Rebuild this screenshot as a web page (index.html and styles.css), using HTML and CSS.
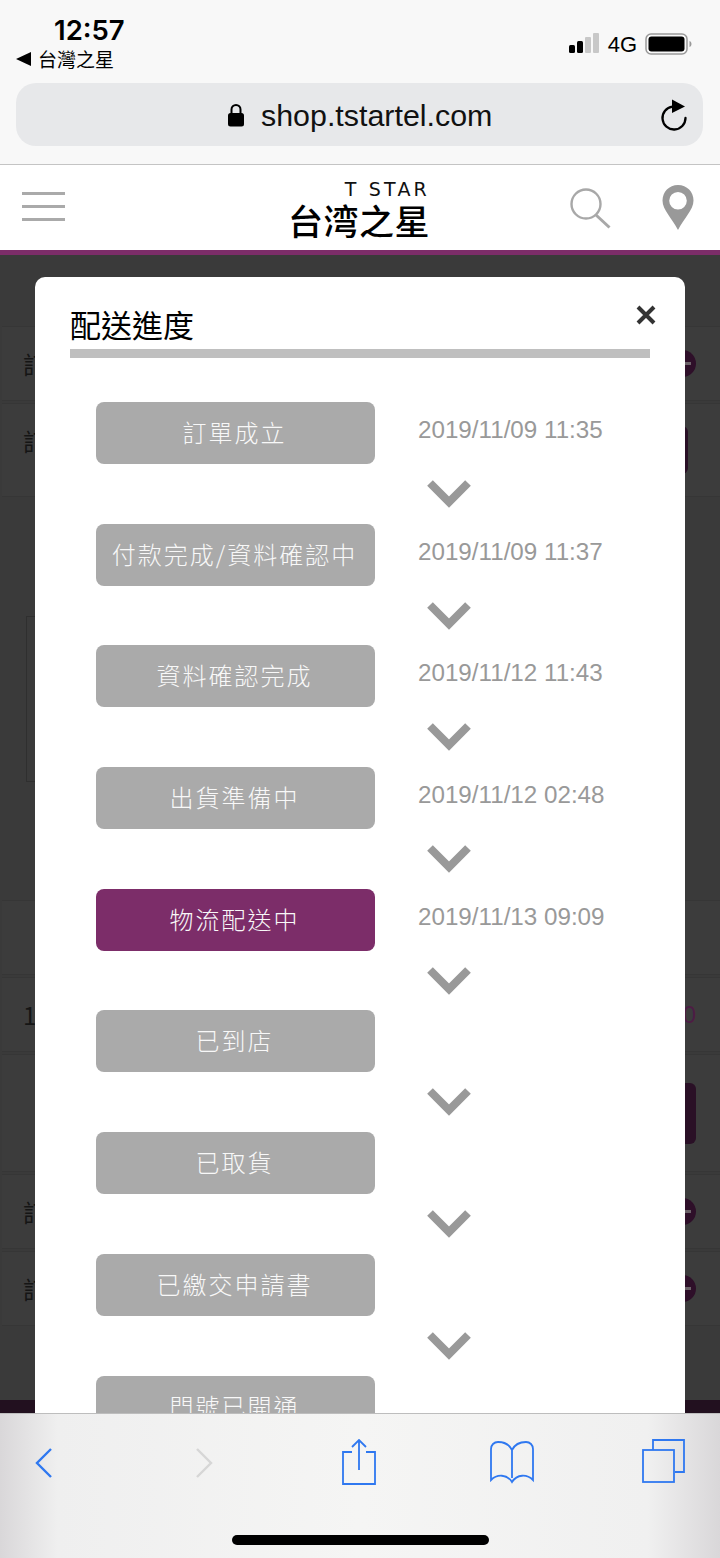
FILE: index.html
```html
<!DOCTYPE html>
<html lang="zh-TW">
<head>
    <meta charset="UTF-8">
    <meta name="viewport" content="width=device-width, initial-scale=1.0">
    <title>配送進度</title>
    <link rel="stylesheet" href="styles.css">
</head>
<body>

<div class="browser-top">
    <div class="status-bar">
        <div class="status-left">
            <div class="clock">12:57</div>
            <div class="back-app"><span class="back-tri"></span>台灣之星</div>
        </div>
        <div class="status-right">
            <svg class="signal" width="32" height="20" viewBox="0 0 32 20">
                <rect x="0" y="12" width="6" height="8" rx="1.500" fill="#000"/>
                <rect x="8" y="8" width="6" height="12" rx="1.500" fill="#000"/>
                <rect x="16" y="4" width="6" height="16" rx="1" fill="#c8c8c8"/>
                <rect x="24" y="0" width="6" height="20" rx="1" fill="#c8c8c8"/>
            </svg>
            <span class="net">4G</span>
            <svg class="battery" width="47" height="22" viewBox="0 0 47 22">
                <rect x="1" y="1" width="41" height="20" rx="5" fill="none" stroke="#999" stroke-width="1.500"/>
                <rect x="3.500" y="3.500" width="36" height="15" rx="3" fill="#000"/>
                <path d="M44.500 8 C46 8.600 46.500 10 46.500 11 C46.500 12 46 13.400 44.500 14 Z" fill="#999"/>
            </svg>
        </div>
    </div>
    <div class="url-bar">
        <svg class="lock" width="18" height="24" viewBox="0 0 18 24">
            <path d="M4.500 11 V6.500 a4.500 4.500 0 0 1 9 0 V11" fill="none" stroke="#000" stroke-width="2"/>
            <rect x="1" y="10" width="16" height="13.500" rx="2.500" fill="#000"/>
        </svg>
        <span class="url-text">shop.tstartel.com</span>
        <svg class="reload" width="28" height="32" viewBox="0 0 28 32">
            <path d="M12.500 7.600 A11.500 11.500 0 1 0 25.500 19" fill="none" stroke="#000" stroke-width="2.300" stroke-linecap="round"/>
            <path d="M12 0.500 L25 7.500 L12 14 Z" fill="#000"/>
        </svg>
    </div>
</div>

<header class="site-header">
    <div class="menu-btn"><i></i><i></i><i></i></div>
    <div class="logo">
        <div class="logo-en">T STAR</div>
        <div class="logo-zh">台湾之星</div>
    </div>
    <svg class="search-ico" width="41" height="41" viewBox="0 0 41 41">
        <circle cx="16" cy="16" r="14.500" fill="none" stroke="#a8a8a8" stroke-width="2.400"/>
        <path d="M26 27 L39.500 39.500" stroke="#a8a8a8" stroke-width="3"/>
    </svg>
    <svg class="pin-ico" width="32" height="45" viewBox="0 0 32 45">
        <path fill-rule="evenodd" fill="#999" d="M16 0 C7 0 0.500 7 0.500 15.500 C0.500 25 10 33 16 45 C22 33 31.500 25 31.500 15.500 C31.500 7 25 0 16 0 Z M16 7 a8.800 8.800 0 1 1 0 17.600 a8.800 8.800 0 1 1 0 -17.600 Z"/>
    </svg>
</header>

<main class="page">
    <!-- order page dimmed behind the dialog -->
    <div class="under">
        <div class="row row-a"><span>訂單編號</span><b class="circle"></b></div>
        <div class="row row-b"><span>訂單狀態</span><b class="dark-btn"></b></div>
        <div class="frame"></div>
        <div class="row row-c"></div>
        <div class="row row-d"><span>1</span><em>0</em></div>
        <div class="row row-e"><b class="dark-btn wide"></b></div>
        <div class="row row-f"><span>訂購項目</span><b class="circle"></b></div>
        <div class="row row-f"><span>訂購資訊</span><b class="circle"></b></div>
    </div>
    <div class="under-foot"></div>

    <section class="modal">
        <svg class="close" width="22" height="22" viewBox="0 0 22 22">
            <path d="M3 3 L19 19 M19 3 L3 19" stroke="#333" stroke-width="4"/>
        </svg>
        <h2 class="modal-title">配送進度</h2>
        <div class="steps" id="steps"></div>
    </section>
</main>

<footer class="browser-bottom">
    <div class="tool-icons">
        <svg width="18" height="32" viewBox="0 0 18 32"><path d="M16 2 L2 16 L16 30" fill="none" stroke="#2f78f0" stroke-width="2.400"/></svg>
        <svg class="t-next" width="18" height="32" viewBox="0 0 18 32"><path d="M2 2 L16 16 L2 30" fill="none" stroke="#d6d6d6" stroke-width="2.400"/></svg>
        <svg class="t-share" width="34" height="46" viewBox="0 0 34 46">
            <path d="M10 13 H1 V45 H33 V13 H24" fill="none" stroke="#2f78f0" stroke-width="1.800"/>
            <path d="M17 1 V31 M10 8 L17 1 L24 8" fill="none" stroke="#2f78f0" stroke-width="1.800"/>
        </svg>
        <svg class="t-book" width="44" height="43" viewBox="0 0 44 43">
            <path d="M22 9 C19 3 13 1 8 1 C4 1 1 4 1 8 V39 C7 33 17 33 22 41 C27 33 37 33 43 39 V8 C43 4 40 1 36 1 C31 1 25 3 22 9 V37" fill="none" stroke="#2f78f0" stroke-width="1.800"/>
        </svg>
        <svg class="t-tabs" width="44" height="44" viewBox="0 0 44 44">
            <rect x="1" y="11" width="31" height="32" fill="none" stroke="#2f78f0" stroke-width="1.800"/>
            <path d="M11 11 V1 H42 V33 H33" fill="none" stroke="#2f78f0" stroke-width="1.800"/>
        </svg>
    </div>
    <div class="home-bar"></div>
</footer>

<script src="steps.js"></script>
</body>
</html>
```

FILE: styles.css
```css
html, body {
    margin: 0;
    padding: 0;
}
body {
    width: 720px;
    height: 1558px;
    overflow: hidden;
    display: flex;
    flex-direction: column;
    font-family: "Liberation Sans", "Noto Sans CJK TC", sans-serif;
    background-color: #3a3a3a;
}

/* browser chrome, top */
.browser-top {
    height: 164px;
    flex: none;
    background-color: #f8f8f8;
    border-bottom: 1px solid #c4c4c4;
    box-sizing: content-box;
}
.status-bar {
    height: 83px;
    display: flex;
    justify-content: space-between;
}
.status-left {
    padding: 14px 0 0 16px;
}
.clock {
    margin-left: 38px;
    font-family: Inter, "Liberation Sans", sans-serif;
    font-size: 27.500px;
    font-weight: 600;
    line-height: 32px;
    color: #000;
}
.back-app {
    display: flex;
    align-items: center;
    margin-top: -1px;
    font-family: "Noto Sans CJK TC", sans-serif;
    font-size: 19px;
    line-height: 28px;
    color: #000;
}
.back-tri {
    width: 0;
    height: 0;
    margin-right: 7px;
    border-top: 7px solid transparent;
    border-bottom: 7px solid transparent;
    border-right: 15px solid #000;
}
.status-right {
    display: flex;
    align-items: flex-start;
    padding: 33px 28px 0 0;
}
.net {
    margin: 1px 8px 0 7px;
    font-size: 22px;
    line-height: 22px;
    color: #000;
}
.url-bar {
    height: 63px;
    margin: 0 17px 0 16px;
    border-radius: 20px;
    background-color: #e7e8ea;
    display: flex;
    align-items: center;
    padding-left: 211px;
    box-sizing: border-box;
}
.url-text {
    margin: 2px 0 0 16px;
    font-size: 30.400px;
    color: #111;
    width: 231px;
    white-space: nowrap;
}
.reload {
    margin-left: 168px;
}

/* site header */
.site-header {
    height: 85px;
    flex: none;
    background-color: #fff;
    border-bottom: 5px solid #7c2d69;
    display: flex;
    align-items: flex-start;
    position: relative;
    z-index: 2;
}
.menu-btn {
    width: 43px;
    margin: 27px 0 0 22px;
    display: flex;
    flex-direction: column;
    gap: 10px;
}
.menu-btn i {
    display: block;
    height: 3px;
    background-color: #aaa;
}
.logo {
    width: 140px;
    margin: 15px 0 0 223px;
    text-align: right;
}
.logo-en {
    margin-right: -2px;
    font-family: "DejaVu Sans", sans-serif;
    font-size: 19px;
    line-height: 18px;
    letter-spacing: 3.200px;
    color: #111;
    white-space: nowrap;
}
.logo-zh {
    margin-top: 3px;
    font-family: "Noto Sans CJK TC", sans-serif;
    font-size: 35px;
    font-weight: 500;
    letter-spacing: 0.500px;
    line-height: 38px;
    color: #000;
    white-space: nowrap;
}
.search-ico {
    margin: 23px 0 0 142px;
}
.pin-ico {
    margin: 20px 0 0 51px;
}

/* dimmed page under the dialog */
.page {
    flex: 1;
    position: relative;
    overflow: hidden;
    background-color: #3a3a3a;
}
.under {
    height: 1145px;
    padding-top: 71px;
    box-sizing: border-box;
}
.row {
    margin-bottom: 2px;
    margin-left: 2px;
    border-top: 1px solid #363636;
    border-bottom: 1px solid #363636;
    background-color: #3c3c3c;
    display: flex;
    align-items: center;
    justify-content: space-between;
    box-sizing: border-box;
    padding: 0 24px 0 21px;
    font-size: 24px;
    color: #151515;
}
.row-a { height: 75px; }
.row-b { height: 94px; padding-right: 32px; }
.row-b span { margin-bottom: 20px; }
.row-c { height: 75px; margin-top: 118px; }
.row-d { height: 75px; }
.row-e { height: 118px; }
.row-f { height: 75px; }
.row span { font-family: "Noto Sans CJK TC", sans-serif; }
.row em {
    font-style: normal;
    color: #4d1c45;
}
.circle {
    width: 27px;
    height: 27px;
    border-radius: 50%;
    background-color: #2e0f29;
    display: flex;
    align-items: center;
    justify-content: center;
}
.circle::after {
    content: "";
    width: 17px;
    height: 3px;
    background-color: #6b6168;
}
.dark-btn {
    width: 140px;
    height: 48px;
    border-radius: 6px;
    background-color: #2a1026;
}
.dark-btn.wide {
    height: 61px;
    margin-left: auto;
}
.frame {
    width: 40px;
    height: 166px;
    margin: 119px 0 0 26px;
    border: 1px solid #2f2f2f;
    box-sizing: border-box;
}
.under-foot {
    height: 13px;
    background-color: #22101f;
}

/* dialog */
.modal {
    position: absolute;
    top: 22px;
    left: 35px;
    width: 650px;
    height: 1300px;
    background-color: #fff;
    border-radius: 10px;
    box-sizing: border-box;
    padding: 29px 35px 0;
}
.close {
    position: absolute;
    top: 27px;
    right: 28px;
}
.modal-title {
    margin: 0;
    height: 43px;
    font-family: "Noto Sans CJK TC", sans-serif;
    font-size: 31px;
    font-weight: 400;
    line-height: 35px;
    color: #000;
    border-bottom: 9px solid #bfbfbf;
}
.steps {
    margin-top: 44px;
    padding-left: 26px;
}
.step-line {
    display: flex;
    height: 62px;
}
.step-btn {
    width: 279px;
    height: 62px;
    flex: none;
    border-radius: 8px;
    background-color: #aaa;
    color: #f8f8f8;
    font-family: "Noto Sans CJK TC", sans-serif;
    font-size: 24px;
    font-weight: 300;
    letter-spacing: 2px;
    text-align: center;
    line-height: 60px;
    padding-right: 2px;
    box-sizing: border-box;
}
.step-btn.now {
    background-color: #7c2d69;
}
.step-date {
    margin: 14px 0 0 43px;
    font-size: 24.200px;
    line-height: 28px;
    color: #999;
    white-space: nowrap;
}
.step-arrow {
    display: block;
    height: 59.700px;
    margin-left: 331px;
    padding-top: 15px;
    box-sizing: border-box;
}

/* browser chrome, bottom */
.browser-bottom {
    height: 145px;
    flex: none;
    position: relative;
    z-index: 2;
    box-sizing: border-box;
    border-top: 1px solid #bdbdbd;
    background: linear-gradient(90deg, #d9d7d9 0, #efefef 8%, #f5f5f4 50%, #f0f0f0 90%, #d9d7d9 100%);
}
.tool-icons {
    height: 121px;
    display: flex;
    align-items: flex-start;
    padding: 25px 0 0 35px;
    box-sizing: border-box;
}
.t-next { margin: 8px 0 0 142px; }
.tool-icons svg:first-child { margin-top: 8px; }
.t-share { margin-left: 129px; }
.t-book { margin: 2px 0 0 114px; }
.t-tabs { margin-left: 108px; }
.home-bar {
    width: 257px;
    height: 10px;
    margin-left: 232px;
    border-radius: 5px;
    background-color: #000;
}
```

FILE: steps.js
```js
// Delivery steps; the date is empty until a step has been reached
const steps = [
    ['訂單成立', '2019/11/09 11:35'],
    ['付款完成/資料確認中', '2019/11/09 11:37'],
    ['資料確認完成', '2019/11/12 11:43'],
    ['出貨準備中', '2019/11/12 02:48'],
    ['物流配送中', '2019/11/13 09:09', true],
    ['已到店', ''],
    ['已取貨', ''],
    ['已繳交申請書', ''],
    ['門號已開通', '']
];

const list = document.getElementById('steps');

steps.forEach((step, i) => {
    const line = document.createElement('div');
    line.className = 'step-line';
    line.innerHTML = '<div class="step-btn' + (step[2] ? ' now' : '') + '">' + step[0] + '</div>' +
        '<div class="step-date">' + step[1] + '</div>';
    list.appendChild(line);

    if (i < steps.length - 1) {
        const arrow = document.createElement('div');
        arrow.className = 'step-arrow';
        arrow.innerHTML = '<svg width="44" height="30" viewBox="0 0 44 30"><path d="M3 4 L22 23 L41 4" fill="none" stroke="#999" stroke-width="8"/></svg>';
        list.appendChild(arrow);
    }
});
```
